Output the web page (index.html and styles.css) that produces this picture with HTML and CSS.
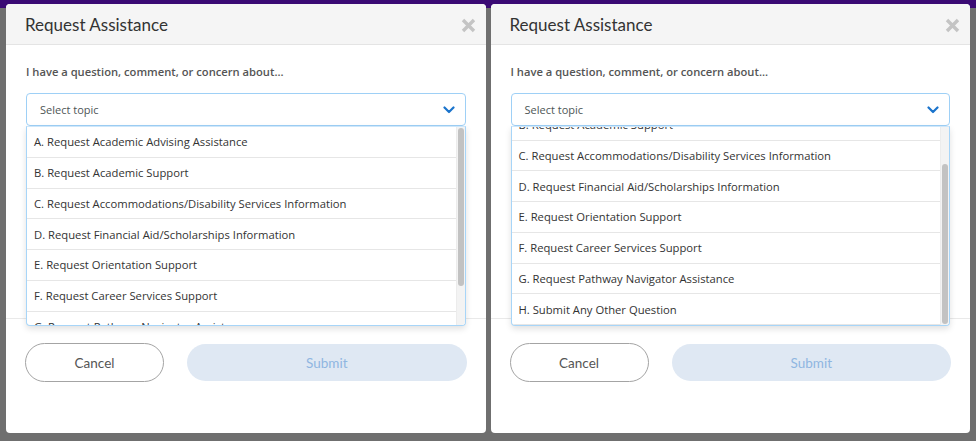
FILE: index.html
```html
<!DOCTYPE html>
<html lang="en">
<head>
<meta charset="utf-8">
<title>Request Assistance</title>
<link rel="stylesheet" href="styles.css">
</head>
<body>
<div class="stage">
  <section class="modal">
    <header class="modal-header">
      <h2 class="modal-title">Request Assistance</h2>
      <svg class="close" viewBox="0 0 15 15" width="15" height="15"><path d="M2 2 L13 13 M13 2 L2 13"/></svg>
    </header>
    <div class="modal-body">
      <p class="label">I have a question, comment, or concern about...</p>
      <div class="select-wrap">
        <div class="select">
          <span class="placeholder">Select topic</span>
          <svg class="chevron" viewBox="0 0 12 8" width="12" height="8"><path d="M1.5 1.5 L6 6 L10.5 1.5"/></svg>
        </div>
        <div class="dropdown">
          <ul class="options">
            <li>A. Request Academic Advising Assistance</li>
            <li>B. Request Academic Support</li>
            <li>C. Request Accommodations/Disability Services Information</li>
            <li>D. Request Financial Aid/Scholarships Information</li>
            <li>E. Request Orientation Support</li>
            <li>F. Request Career Services Support</li>
            <li>G. Request Pathway Navigator Assistance</li>
            <li>H. Submit Any Other Question</li>
          </ul>
          <div class="scrollbar"><div class="thumb"></div></div>
        </div>
      </div>
    </div>
    <footer class="modal-footer">
      <button class="btn btn-cancel">Cancel</button>
      <button class="btn btn-submit">Submit</button>
    </footer>
  </section>

  <section class="modal">
    <header class="modal-header">
      <h2 class="modal-title">Request Assistance</h2>
      <svg class="close" viewBox="0 0 15 15" width="15" height="15"><path d="M2 2 L13 13 M13 2 L2 13"/></svg>
    </header>
    <div class="modal-body">
      <p class="label">I have a question, comment, or concern about...</p>
      <div class="select-wrap">
        <div class="select">
          <span class="placeholder">Select topic</span>
          <svg class="chevron" viewBox="0 0 12 8" width="12" height="8"><path d="M1.5 1.5 L6 6 L10.5 1.5"/></svg>
        </div>
        <div class="dropdown">
          <ul class="options options-scrolled">
            <li>A. Request Academic Advising Assistance</li>
            <li>B. Request Academic Support</li>
            <li>C. Request Accommodations/Disability Services Information</li>
            <li>D. Request Financial Aid/Scholarships Information</li>
            <li>E. Request Orientation Support</li>
            <li>F. Request Career Services Support</li>
            <li>G. Request Pathway Navigator Assistance</li>
            <li>H. Submit Any Other Question</li>
          </ul>
          <div class="scrollbar"><div class="thumb thumb-bottom"></div></div>
        </div>
      </div>
    </div>
    <footer class="modal-footer">
      <button class="btn btn-cancel">Cancel</button>
      <button class="btn btn-submit">Submit</button>
    </footer>
  </section>
</div>
</body>
</html>
```

FILE: styles.css
```css
html, body {
  margin: 0;
  padding: 0;
  width: 976px;
  height: 441px;
  overflow: hidden;
}
body {
  background: linear-gradient(#3a0a74 0, #3a0a74 8px, #6f6f6f 8px, #6f6f6f 100%);
  font-family: "Open Sans", "Liberation Sans", sans-serif;
  color: #333;
}
.stage {
  display: flex;
  gap: 5px;
  padding: 4px 6px 0 6px;
}
.modal {
  flex: 1;
  height: 429px;
  background: #fff;
  border-radius: 4px;
  overflow: hidden;
  display: flex;
  flex-direction: column;
}
.modal-header {
  height: 40px;
  background: #f5f5f5;
  border-bottom: 1px solid #e4e4e4;
  display: flex;
  align-items: center;
  justify-content: space-between;
  padding: 0 10px 0 19px;
  box-sizing: content-box;
}
.modal-title {
  margin: 0;
  font-family: "Lato", "Open Sans", sans-serif;
  font-weight: 400;
  font-size: 17px;
  color: #333;
}
.close {
  margin-top: 2px;
}
.close path {
  stroke: #c4c4c4;
  stroke-width: 3.4;
  fill: none;
}
.modal-body {
  height: 274px;
  box-sizing: border-box;
  padding: 19px 20px 0 20px;
  border-bottom: 1px solid #e9e9e9;
}
.label {
  margin: 0;
  font-size: 11.2px;
  line-height: 16px;
  font-weight: 600;
  color: #555;
}
.select-wrap {
  position: relative;
  margin-top: 13px;
}
.select {
  height: 33px;
  box-sizing: border-box;
  border: 1px solid #9ed0f6;
  border-radius: 4px;
  display: flex;
  align-items: center;
  justify-content: space-between;
  padding: 0 10px 0 13px;
}
.placeholder {
  font-size: 11px;
  color: #4d5656;
}
.chevron path {
  stroke: #1b74cc;
  stroke-width: 2.2;
  fill: none;
  stroke-linecap: round;
  stroke-linejoin: round;
}
.dropdown {
  position: absolute;
  top: 33px;
  left: 0;
  right: 0;
  height: 200px;
  box-sizing: border-box;
  border: 1px solid #a7d5f8;
  border-top-color: #cfe7fa;
  border-radius: 0 0 4px 4px;
  background: #fff;
  box-shadow: 0 3px 6px rgba(0, 0, 0, 0.12);
  overflow: hidden;
  z-index: 2;
}
.options {
  list-style: none;
  margin: 0 8px 0 0;
  padding: 0;
}
.options-scrolled {
  margin-top: -48px;
}
.options li {
  height: 30.75px;
  box-sizing: border-box;
  border-bottom: 1px solid #e6e6e6;
  display: flex;
  align-items: center;
  padding-left: 7px;
  font-size: 11.25px;
  color: #333;
  white-space: nowrap;
}
.scrollbar {
  position: absolute;
  top: 0;
  right: 0;
  bottom: 0;
  width: 8px;
  background: #f3f3f3;
  border-left: 1px solid #ececec;
}
.thumb {
  position: absolute;
  left: 1px;
  right: 1px;
  top: 1px;
  height: 158px;
  background: #c2c2c2;
  border-radius: 3px;
}
.thumb-bottom {
  top: auto;
  bottom: 1px;
  height: 160px;
}
.modal-footer {
  display: flex;
  align-items: center;
  gap: 23px;
  padding: 24px 19px 0 19px;
}
.btn {
  font-family: "Lato", "Open Sans", sans-serif;
  font-size: 13.5px;
  border-radius: 20px;
  cursor: pointer;
  padding: 0;
}
.btn-cancel {
  width: 139px;
  height: 39px;
  background: #fff;
  border: 1px solid #a4a4a4;
  color: #555;
}
.btn-submit {
  flex: 1;
  height: 37px;
  border: none;
  background: #dfe8f3;
  color: #8fb6e1;
}
```
